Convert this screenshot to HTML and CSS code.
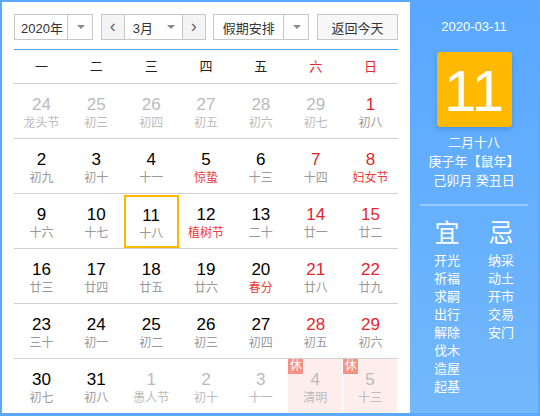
FILE: index.html
```html
<!DOCTYPE html>
<html lang="zh-CN">
<head>
    <meta charset="UTF-8">
    <title>万年历</title>
    <link rel="stylesheet" href="styles.css">
</head>
<body>
    <div class="calendar">
        <!-- 左侧：月历 -->
        <div class="main">
            <div class="toolbar">
                <div class="select year-select">
                    <span class="select-text">2020年</span>
                    <span class="select-arrow"></span>
                </div>
                <div class="month-group">
                    <span class="nav-btn">&lsaquo;</span>
                    <div class="select month-select">
                        <span class="select-text">3月</span>
                        <span class="select-arrow plain"></span>
                    </div>
                    <span class="nav-btn">&rsaquo;</span>
                </div>
                <div class="select holiday-select">
                    <span class="select-text">假期安排</span>
                    <span class="select-arrow"></span>
                </div>
                <button class="today-btn">返回今天</button>
            </div>

            <div class="week-head">
                <span>一</span><span>二</span><span>三</span><span>四</span><span>五</span>
                <span class="red">六</span><span class="red">日</span>
            </div>

            <div class="week">
                <div class="day other"><b>24</b><i>龙头节</i></div>
                <div class="day other"><b>25</b><i>初三</i></div>
                <div class="day other"><b>26</b><i>初四</i></div>
                <div class="day other"><b>27</b><i>初五</i></div>
                <div class="day other"><b>28</b><i>初六</i></div>
                <div class="day other"><b>29</b><i>初七</i></div>
                <div class="day weekend"><b>1</b><i>初八</i></div>
            </div>
            <div class="week">
                <div class="day"><b>2</b><i>初九</i></div>
                <div class="day"><b>3</b><i>初十</i></div>
                <div class="day"><b>4</b><i>十一</i></div>
                <div class="day fest"><b>5</b><i>惊蛰</i></div>
                <div class="day"><b>6</b><i>十三</i></div>
                <div class="day weekend"><b>7</b><i>十四</i></div>
                <div class="day weekend fest"><b>8</b><i>妇女节</i></div>
            </div>
            <div class="week">
                <div class="day"><b>9</b><i>十六</i></div>
                <div class="day"><b>10</b><i>十七</i></div>
                <div class="day today"><b>11</b><i>十八</i></div>
                <div class="day fest"><b>12</b><i>植树节</i></div>
                <div class="day"><b>13</b><i>二十</i></div>
                <div class="day weekend"><b>14</b><i>廿一</i></div>
                <div class="day weekend"><b>15</b><i>廿二</i></div>
            </div>
            <div class="week">
                <div class="day"><b>16</b><i>廿三</i></div>
                <div class="day"><b>17</b><i>廿四</i></div>
                <div class="day"><b>18</b><i>廿五</i></div>
                <div class="day"><b>19</b><i>廿六</i></div>
                <div class="day fest"><b>20</b><i>春分</i></div>
                <div class="day weekend"><b>21</b><i>廿八</i></div>
                <div class="day weekend"><b>22</b><i>廿九</i></div>
            </div>
            <div class="week">
                <div class="day"><b>23</b><i>三十</i></div>
                <div class="day"><b>24</b><i>初一</i></div>
                <div class="day"><b>25</b><i>初二</i></div>
                <div class="day"><b>26</b><i>初三</i></div>
                <div class="day"><b>27</b><i>初四</i></div>
                <div class="day weekend"><b>28</b><i>初五</i></div>
                <div class="day weekend"><b>29</b><i>初六</i></div>
            </div>
            <div class="week">
                <div class="day"><b>30</b><i>初七</i></div>
                <div class="day"><b>31</b><i>初八</i></div>
                <div class="day other"><b>1</b><i>愚人节</i></div>
                <div class="day other"><b>2</b><i>初十</i></div>
                <div class="day other"><b>3</b><i>十一</i></div>
                <div class="day other rest"><span class="rest-tag">休</span><b>4</b><i>清明</i></div>
                <div class="day other rest"><span class="rest-tag">休</span><b>5</b><i>十三</i></div>
            </div>
        </div>

        <!-- 右侧：当天详情 -->
        <div class="side">
            <div class="side-date">2020-03-11</div>
            <div class="big-day">11</div>
            <div class="lunar-info">
                <p>二月十八</p>
                <p>庚子年【鼠年】</p>
                <p>己卯月 癸丑日</p>
            </div>
            <div class="side-line"></div>
            <div class="yiji">
                <div class="yiji-col">
                    <h3>宜</h3>
                    <p>开光</p><p>祈福</p><p>求嗣</p><p>出行</p>
                    <p>解除</p><p>伐木</p><p>造屋</p><p>起基</p>
                </div>
                <div class="yiji-col">
                    <h3>忌</h3>
                    <p>纳采</p><p>动土</p><p>开市</p><p>交易</p><p>安门</p>
                </div>
            </div>
        </div>
    </div>
</body>
</html>
```

FILE: styles.css
```css
body {
    margin: 0;
    padding: 0;
    font-family: "Liberation Sans", "Noto Sans CJK SC", sans-serif;
    background: white;
}
.calendar {
    width: 540px;
    height: 416px;
    box-sizing: border-box;
    border: 2px solid #5aa9fe;
    border-bottom-width: 3px;
    display: flex;
    overflow: hidden;
}
.main {
    width: 408px;
    box-sizing: border-box;
    padding: 12px 12px 0 12px;
    background: white;
}
/* 顶部工具栏 */
.toolbar {
    display: flex;
    justify-content: space-between;
    height: 26px;
    padding-bottom: 9px;
    border-bottom: 1px solid #4ba1f7;
    font-size: 13px;
    color: #333;
}
.select {
    display: flex;
    align-items: center;
    box-sizing: border-box;
    height: 26px;
    border: 1px solid #c8c8c8;
    background: white;
}
.select-text {
    flex: 1;
    text-align: center;
}
.select-arrow {
    width: 24px;
    height: 100%;
    border-left: 1px solid #c8c8c8;
    position: relative;
}
.select-arrow::after {
    content: "";
    position: absolute;
    left: 9px;
    top: 10px;
    border-left: 4px solid transparent;
    border-right: 4px solid transparent;
    border-top: 4px solid #888;
}
.select-arrow.plain {
    border-left: none;
}
.year-select {
    width: 79px;
}
.year-select .select-text {
    padding-left: 2px;
}
.month-group {
    display: flex;
    width: 105px;
    height: 26px;
    box-sizing: border-box;
    border: 1px solid #c8c8c8;
}
.nav-btn {
    width: 22px;
    background: #f4f4f4;
    text-align: center;
    line-height: 22px;
    font-size: 18px;
    color: #666;
}
.month-select {
    flex: 1;
    height: 24px;
    border: none;
    border-left: 1px solid #c8c8c8;
    border-right: 1px solid #c8c8c8;
}
.month-select .select-text {
    padding-left: 8px;
    text-align: left;
}
.holiday-select {
    width: 96px;
}
.today-btn {
    width: 81px;
    height: 26px;
    padding: 0;
    border: 1px solid #c8c8c8;
    background: #f7f7f7;
    font-family: inherit;
    font-size: 13px;
    color: #333;
}
/* 星期表头 */
.week-head {
    display: grid;
    grid-template-columns: repeat(7, 1fr);
    height: 33px;
    line-height: 33px;
    text-align: center;
    font-size: 13px;
    color: #222;
}
.red {
    color: #e3262e;
}
/* 日期格子 */
.week {
    display: grid;
    grid-template-columns: repeat(7, 1fr);
    border-top: 1px solid #d0d0d0;
    height: 54px;
}
.day {
    position: relative;
    box-sizing: border-box;
    padding-top: 11px;
    text-align: center;
}
.day b {
    display: block;
    font-weight: normal;
    font-size: 17px;
    line-height: 20px;
    color: #000;
}
.day i {
    display: block;
    font-style: normal;
    font-size: 12px;
    line-height: 16px;
    color: #999;
}
.day.weekend b {
    color: #e3262e;
}
.day.fest i {
    color: #ef3a3a;
}
.day.other b,
.day.other i {
    color: #bbb;
}
.day.today {
    border: 2px solid #ffb800;
    padding-top: 9px;
    margin: 1px 0 0;
    height: 53px;
}
.day.rest {
    background: #fdeeec;
    border-right: 1px solid white;
}
.rest-tag {
    position: absolute;
    left: 0;
    top: 0;
    width: 15px;
    height: 15px;
    line-height: 15px;
    font-size: 12px;
    color: white;
    background: #f59186;
}
/* 右侧详情 */
.side {
    width: 128px;
    background: linear-gradient(#58a7ff, #73b8fb);
    color: white;
    text-align: center;
}
.side-date {
    margin-top: 16px;
    font-size: 13px;
    line-height: 18px;
}
.big-day {
    width: 75px;
    height: 75px;
    margin: 16px auto 0;
    background: #ffb900;
    border-radius: 3px;
    box-shadow: 0 2px 4px rgba(0, 60, 140, 0.25);
    font-size: 58px;
    line-height: 78px;
}
.lunar-info {
    margin-top: 6px;
    font-size: 13px;
}
.lunar-info p {
    margin: 0;
    line-height: 19px;
}
.side-line {
    height: 2px;
    margin: 14px 10px 0;
    background: rgba(255, 255, 255, 0.35);
}
.yiji {
    display: flex;
    padding: 0 10px;
}
.yiji-col {
    flex: 1;
}
.yiji-col h3 {
    margin: 13px 0 5px;
    font-size: 25px;
    font-weight: normal;
    line-height: 28px;
}
.yiji-col p {
    margin: 0;
    font-size: 13px;
    line-height: 18px;
}
```
